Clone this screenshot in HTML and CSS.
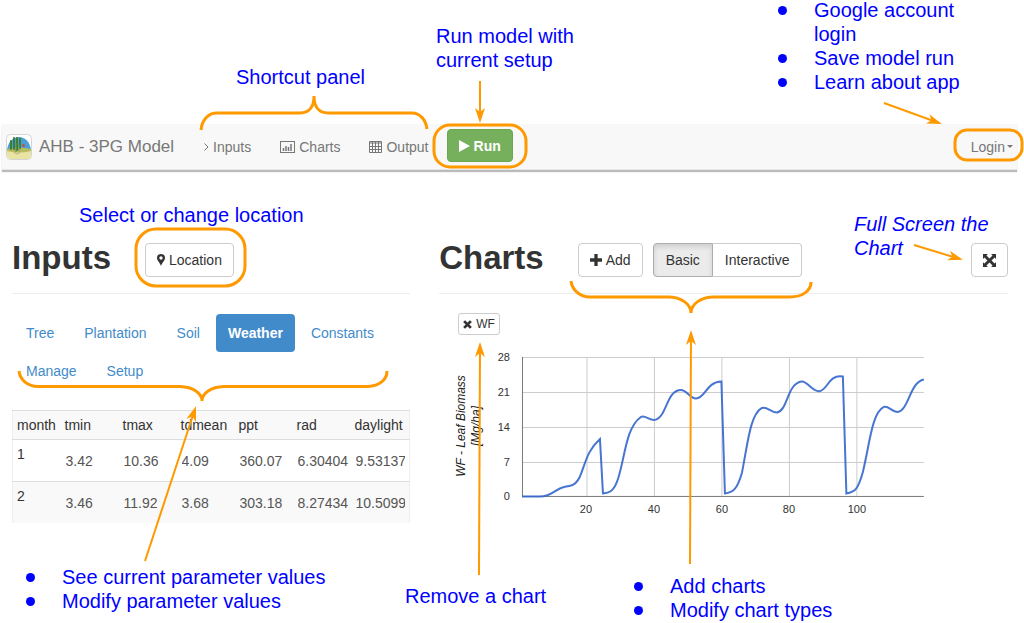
FILE: index.html
```html
<!DOCTYPE html>
<html lang="en">
<head>
  <meta charset="UTF-8" />
  <meta name="viewport" content="width=device-width, initial-scale=1.0"/>
  <title>AHB - 3PG Model</title>
  <link rel="stylesheet" href="styles.css">
</head>
<body>

<!-- Navbar -->
<nav class="navbar">
  <a class="brand" href="#">
    <svg class="logo" viewBox="0 0 26 26" aria-hidden="true">
      <rect x="0.5" y="0.5" width="25" height="25" rx="4" fill="#fff" stroke="#d5d5d5"/>
      <path d="M1 16C2 8 7 3 13 3s11 5 12 13z" fill="#4b9fd8"/>
      <path d="M1 15h24v6q0 4-4 4H5q-4 0-4-4z" fill="#e9e3a4"/>
      <path d="M1 15q12-3 24 0v2q-12 3-24 0z" fill="#b5bd5c"/>
      <path d="M5 7v8M8 4v11M11 4v12M14 5v9" stroke="#3d7c33" stroke-width="2" stroke-linecap="round"/>
      <path d="M10 9v9M13 10v7" stroke="#6a8f4a"/>
      <path d="M17.500 10v3" stroke="#d04a3c" stroke-width="2"/>
      <path d="M8 16q0 4 3 4t3-4" fill="none" stroke="#b9ae83"/>
    </svg>
    AHB - 3PG Model
  </a>
  <div class="nav-links">
    <a href="#inputs">
      <svg class="chevron" viewBox="0 0 5 8" aria-hidden="true"><path d="M0.500 0.500L4 4L0.500 7.500"/></svg>
      Inputs
    </a>
    <a href="#charts">
      <svg class="icon" viewBox="0 0 15 12" aria-hidden="true">
        <rect x="0.5" y="0.5" width="14" height="11"/>
        <path d="M3.500 7v3M6 5v5M8.500 6v4M11 3v7" stroke-width="1.500"/>
      </svg>
      Charts
    </a>
    <a href="#output">
      <svg class="icon table-icon" viewBox="0 0 13 12" aria-hidden="true">
        <path d="M0.500 0.500h12v11h-12zM0.500 2h12M0.500 5.500h12M0.500 8.500h12M3.500 1v10M6.500 1v10M9.500 1v10"/>
      </svg>
      Output
    </a>
  </div>
  <button class="btn btn-run" type="button">
    <svg class="play" viewBox="0 0 11 12" aria-hidden="true"><path d="M0 0L11 6L0 12z"/></svg>
    Run
  </button>
  <button class="login" type="button">Login<span class="caret"></span></button>
</nav>

<main class="container">

  <!-- Inputs -->
  <section id="inputs">
    <div class="section-head">
      <h1>Inputs</h1>
      <button class="btn" type="button">
        <svg class="pin" viewBox="0 0 8 12" aria-hidden="true"><path fill-rule="evenodd" d="M4 0a4 4 0 0 1 4 4C8 6.500 5.500 8 4 12C2.500 8 0 6.500 0 4a4 4 0 0 1 4-4zM4 2.300a1.700 1.700 0 1 0 0 3.400a1.700 1.700 0 0 0 0-3.400z"/></svg>
        Location
      </button>
    </div>

    <div class="tabs">
      <a href="#">Tree</a>
      <a href="#">Plantation</a>
      <a href="#">Soil</a>
      <a href="#" class="active">Weather</a>
      <a href="#">Constants</a>
      <a href="#">Manage</a>
      <a href="#">Setup</a>
    </div>

    <table class="weather">
      <thead>
        <tr>
          <th class="month">month</th><th>tmin</th><th>tmax</th><th>tdmean</th><th>ppt</th><th>rad</th><th class="last">daylight</th>
        </tr>
      </thead>
      <tbody>
        <tr>
          <td class="month">1</td>
          <td><input type="text" aria-label="tmin 1" value="3.42"></td>
          <td><input type="text" aria-label="tmax 1" value="10.36"></td>
          <td><input type="text" aria-label="tdmean 1" value="4.09"></td>
          <td><input type="text" aria-label="ppt 1" value="360.07"></td>
          <td><input type="text" aria-label="rad 1" value="6.30404"></td>
          <td class="last"><input type="text" aria-label="daylight 1" value="9.531373"></td>
        </tr>
        <tr>
          <td class="month">2</td>
          <td><input type="text" aria-label="tmin 2" value="3.46"></td>
          <td><input type="text" aria-label="tmax 2" value="11.92"></td>
          <td><input type="text" aria-label="tdmean 2" value="3.68"></td>
          <td><input type="text" aria-label="ppt 2" value="303.18"></td>
          <td><input type="text" aria-label="rad 2" value="8.27434"></td>
          <td class="last"><input type="text" aria-label="daylight 2" value="10.5099"></td>
        </tr>
      </tbody>
    </table>
  </section>

  <!-- Charts -->
  <section id="charts">
    <div class="section-head">
      <h1>Charts</h1>
      <button class="btn" type="button">
        <svg class="plus" viewBox="0 0 11 11" aria-hidden="true"><path d="M4 0h3v4h4v3H7v4H4V7H0V4h4z"/></svg>
        Add
      </button>
      <div class="btn-group">
        <button class="btn pressed" type="button">Basic</button>
        <button class="btn" type="button">Interactive</button>
      </div>
      <button class="btn btn-full" type="button" aria-label="Full screen">
        <svg class="expand" viewBox="0 0 12 12" aria-hidden="true">
          <path d="M0 0h4.500L3.200 1.300L6 4.100L8.800 1.300L7.500 0H12v4.500L10.700 3.200L7.900 6L10.700 8.800L12 7.500V12H7.500L8.800 10.700L6 7.900L3.200 10.700L4.500 12H0V7.500L1.300 8.800L4.100 6L1.300 3.200L0 4.500z"/>
        </svg>
      </button>
    </div>

    <div class="chart-tags">
      <button class="btn btn-small" type="button">
        <svg class="cross" viewBox="0 0 8 8" aria-hidden="true"><path d="M1 1l6 6M7 1l-6 6"/></svg>
        WF
      </button>
    </div>

    <svg class="chart" viewBox="0 0 569 190" role="img" aria-label="WF - Leaf Biomass [Mg/ha]">
      <g class="grid">
        <path d="M83 17.500H485M83 52.500H485M83 87.500H485M83 122.500H485"/>
        <path d="M148 17V156M215.500 17V156M283 17V156M350.500 17V156M418 17V156"/>
      </g>
      <path class="axis" d="M83.500 17V156.500H485"/>
      <path class="line" d="M83 156.500H101C113 156.500 116 149 125 147C130 146 136 147 141 136.500C147 122 148 111 161 99L164 153.500C170 153 174 152 178 142C186 121 186 88 202 77C206 75 210 80 215 80C228 79 227 50 242 50C248 50 251 58.500 257 58.500C267 58 267 42 282.500 41.500L286 153.500C294 152.500 298 150 303 133C309 103 311 75 323 68C328 66 332 72.500 338 72.500C349 71 348 43 363 41.500C368 41 373 51 380 51.300C389 51 389 34 404 36.500L407.500 153.500C416 152 419 150 424 132C431 103 433 73 445 67C449 65 453 72 459 72C470 70 471 42 485 39.500"/>
      <g class="labels y">
        <text x="71" y="21">28</text>
        <text x="71" y="56">21</text>
        <text x="71" y="91">14</text>
        <text x="71" y="126">7</text>
        <text x="71" y="160">0</text>
      </g>
      <g class="labels x">
        <text x="147" y="173">20</text>
        <text x="215" y="173">40</text>
        <text x="283" y="173">60</text>
        <text x="350" y="173">80</text>
        <text x="418" y="173">100</text>
      </g>
      <g class="axis-title">
        <text transform="translate(26 86) rotate(-90)">WF - Leaf Biomass</text>
        <text transform="translate(41 86) rotate(-90)">[Mg/ha]</text>
      </g>
    </svg>
  </section>
</main>

<!-- Callouts over the app -->
<svg class="marks" viewBox="0 0 1024 623" aria-hidden="true">
  <defs>
    <marker id="tip" markerUnits="userSpaceOnUse" markerWidth="16" markerHeight="12" refX="12" refY="6" orient="auto">
      <path d="M0 1L15 6L0 11L4 6z" fill="#ff9900"/>
    </marker>
  </defs>
  <g class="braces">
    <path d="M201 130C202 120 208 113 217 113H300C309 113 314 107 314 96C314 107 319 113 328 113H412C420 113 426 120 427 129"/>
    <path d="M19 371C20 380 28 386.500 38 386.500H180C193 387 202 393 202 401C202 393 211 387 224 386.500H368C379 386 387 380 387 371"/>
    <path d="M571 281C572 290 580 297 590 297H668C681 297 691 304 691 313C691 304 701 297 714 297H790C802 297 811 291 811 282"/>
    <rect x="434" y="125" width="92" height="42" rx="16"/>
    <rect x="955" y="130" width="67" height="30" rx="12"/>
    <rect x="136" y="229" width="109" height="57" rx="20"/>
  </g>
  <g class="arrows">
    <path d="M480 81V120"/>
    <path d="M884 103L939 123"/>
    <path d="M914 245L960 259"/>
    <path d="M145 561L195 409"/>
    <path d="M479 575L480 345"/>
    <path d="M690 564L691 333"/>
  </g>
</svg>

<p class="note note-shortcut">Shortcut panel</p>
<p class="note note-run">Run model with<br>current setup</p>
<ul class="note note-login">
  <li><span>Google account login</span></li>
  <li><span>Save model run</span></li>
  <li><span>Learn about app</span></li>
</ul>
<p class="note note-location">Select or change location</p>
<p class="note note-full">Full Screen the<br>Chart</p>
<ul class="note note-params">
  <li><span>See current parameter values</span></li>
  <li><span>Modify parameter values</span></li>
</ul>
<p class="note note-remove">Remove a chart</p>
<ul class="note note-add">
  <li><span>Add charts</span></li>
  <li><span>Modify chart types</span></li>
</ul>

</body>
</html>
```
FILE: styles.css
```css
* {
  margin: 0;
  padding: 0;
  box-sizing: border-box;
}

body {
  position: relative;
  min-height: 100vh;
  padding: 124px 0 93px;
  background: #fff;
  color: #333;
  font-family: "Liberation Sans", Arial, sans-serif;
  font-size: 14px;
  line-height: 20px;
}

a {
  text-decoration: none;
}

button,
input {
  font: inherit;
}

/* Navbar */
.navbar {
  display: flex;
  align-items: center;
  height: 46px;
  margin: 0 7px 0 2px;
  padding: 0 4px;
  background: #f8f8f8;
  border-bottom: 1px solid #e7e7e7;
  box-shadow: 0 2px 1px #bbb;
  color: #777;
}

.navbar a {
  display: flex;
  align-items: center;
  color: #777;
}

.brand {
  gap: 7px;
  margin-right: 30px;
  font-size: 17px;
}

.logo {
  width: 26px;
  height: 26px;
}

.nav-links {
  display: flex;
  gap: 29px;
}

.nav-links a {
  gap: 4px;
}

.icon,
.chevron {
  fill: none;
  stroke: #777;
}

.icon {
  width: 15px;
  height: 12px;
}

.table-icon {
  width: 13px;
}

.chevron {
  width: 5px;
  height: 8px;
}

.login {
  display: flex;
  align-items: center;
  gap: 2px;
  margin-left: auto;
  background: none;
  border: none;
  color: #777;
  cursor: pointer;
}

.caret {
  border: 3px solid transparent;
  border-top-color: #777;
  border-bottom: none;
}

/* Buttons */
.btn {
  display: flex;
  align-items: center;
  justify-content: center;
  gap: 4px;
  height: 34px;
  padding: 0 11px;
  background: #fff;
  border: 1px solid #ccc;
  border-radius: 4px;
  color: #333;
  cursor: pointer;
}

.btn svg {
  fill: #333;
}

.btn-run {
  margin: 0 0 2px 18px;
  height: 33px;
  background: #77b05d;
  border-color: #6aa84f;
  color: #fff;
  font-weight: bold;
}

.btn-run .play {
  width: 11px;
  height: 12px;
  fill: #fff;
}

.btn-group {
  display: flex;
}

.btn-group .btn:first-child {
  border-radius: 4px 0 0 4px;
}

.btn-group .btn {
  padding: 0 12px;
}

.btn-group .btn:last-child {
  border-left: none;
  border-radius: 0 4px 4px 0;
}

.btn-group .pressed {
  background: #ebebeb;
  border-color: #adadad;
  box-shadow: inset 0 3px 5px rgba(0, 0, 0, 0.12);
}

.btn-full {
  margin-left: auto;
}

.btn-small {
  height: 22px;
  padding: 0 4px;
  border-radius: 3px;
  font-size: 12px;
}

.pin {
  width: 8px;
  height: 12px;
}

.plus {
  width: 12px;
  height: 12px;
}

.expand {
  width: 13px;
  height: 13px;
}

.btn .cross {
  width: 9px;
  height: 9px;
  stroke: #333;
  stroke-width: 2.5;
}

/* Sections */
.container {
  display: grid;
  grid-template-columns: 7fr 10fr;
  gap: 29px;
  padding: 73px 16px 0 12px;
}

.container section {
  min-width: 0;
}

.section-head {
  display: flex;
  align-items: flex-start;
  gap: 10px;
  padding-bottom: 16px;
  border-bottom: 1px solid #eee;
}

h1 {
  margin-right: 24px;
  font-size: 33px;
  line-height: 30px;
}

/* Tabs */
.tabs {
  display: flex;
  flex-wrap: wrap;
  column-gap: 2px;
  margin: 20px 0;
}

.tabs a {
  padding: 9px 14px;
  border-radius: 4px;
  color: #428bca;
}

.tabs .active {
  background: #428bca;
  color: #fff;
  font-weight: bold;
  padding: 9px 12px;
}

/* Weather table */
.weather {
  width: 100%;
  table-layout: fixed;
  border-collapse: collapse;
  border-left: 1px solid #eee;
  border-right: 1px solid #eee;
}

.weather th,
.weather td {
  width: 58px;
  padding: 4px 0 4px 4px;
  border-top: 1px solid #ddd;
  text-align: left;
  vertical-align: top;
  font-weight: normal;
  white-space: nowrap;
}

.weather .month {
  width: 48px;
}

.weather .last {
  width: auto;
  padding-right: 4px;
}

.weather thead tr,
.weather tbody tr:nth-child(even) {
  background: #f9f9f9;
}

.weather input {
  display: block;
  width: 100%;
  height: 33px;
  border: none;
  border-left: 1px solid transparent;
  background: none;
  color: #555;
}

/* Chart */
.chart-tags {
  display: flex;
  padding: 19px 19px 5px;
}

.chart {
  display: block;
  width: 100%;
}

.grid path {
  stroke: #ccc;
}

.axis {
  fill: none;
  stroke: #777;
}

.line {
  fill: none;
  stroke: #3366cc;
  stroke-opacity: 0.9;
  stroke-width: 2;
}

.labels {
  fill: #333;
  font-size: 11px;
}

.labels.y {
  text-anchor: end;
}

.labels.x,
.axis-title {
  text-anchor: middle;
}

.axis-title {
  fill: #222;
  font-size: 12px;
  font-style: italic;
}

/* Callouts */
.marks {
  position: absolute;
  top: 0;
  left: 0;
  width: 1024px;
  height: 623px;
  pointer-events: none;
}

.braces,
.arrows {
  fill: none;
  stroke: #ff9900;
}

.braces {
  stroke-width: 3;
}

.arrows {
  stroke-width: 2;
}

.arrows path {
  marker-end: url(#tip);
}

.note {
  position: absolute;
  color: #0000ff;
  font-size: 20px;
  line-height: 24px;
  white-space: nowrap;
  list-style: none;
}

.note li {
  display: flex;
  gap: 27px;
}

.note li::before {
  content: "";
  flex: none;
  width: 9px;
  height: 9px;
  margin-top: 8px;
  border-radius: 50%;
  background: #0000ff;
}

.note-shortcut {
  top: 65px;
  left: 236px;
}

.note-run {
  top: 24px;
  left: 436px;
}

.note-login {
  top: -2px;
  left: 778px;
  width: 190px;
  white-space: normal;
}

.note-location {
  top: 203px;
  left: 79px;
}

.note-full {
  top: 212px;
  left: 854px;
  font-style: italic;
}

.note-params {
  top: 565px;
  left: 26px;
}

.note-remove {
  top: 584px;
  left: 405px;
}

.note-add {
  top: 574px;
  left: 634px;
}
```
